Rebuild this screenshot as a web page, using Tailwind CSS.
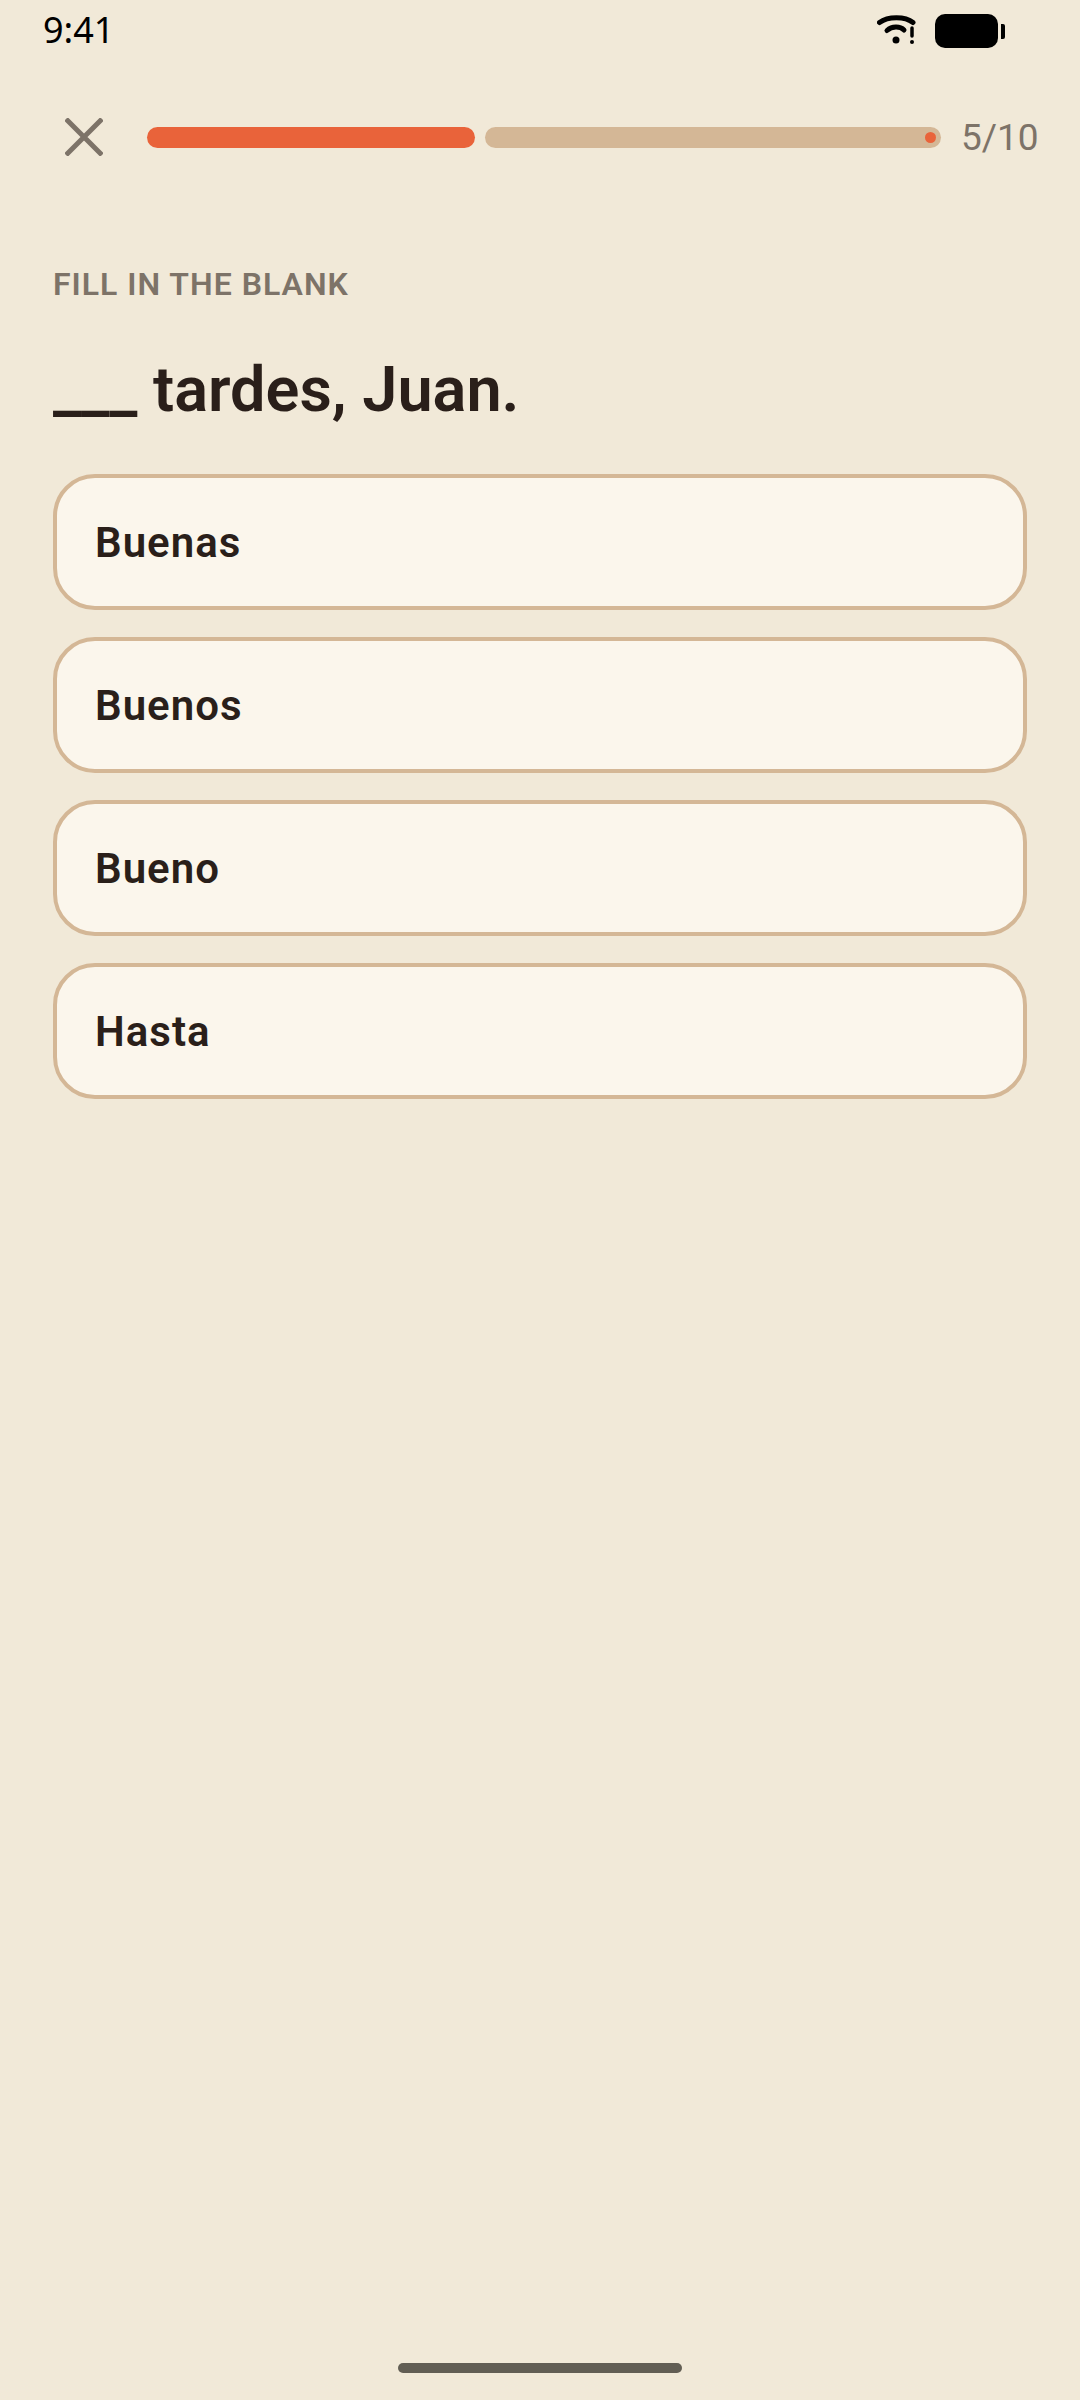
<!DOCTYPE html>
<html lang="en">
  <head>
    <meta charset="UTF-8" />
    <meta name="viewport" content="width=device-width, initial-scale=1.0" />
    <title>Fill in the blank</title>
    <script src="https://cdn.jsdelivr.net/npm/@tailwindcss/browser@4"></script>
  </head>
  <body class="bg-[#f1e9d8] font-['Roboto',sans-serif]">
    <div class="flex flex-col w-[1080px] h-[2400px]">
      <!-- Status bar -->
      <div class="flex items-center justify-between h-[60px] pl-[43px] pr-[75px] shrink-0">
        <span class="text-[36px] leading-none text-black font-['Noto_Sans',sans-serif]">9:41</span>
        <div class="flex items-center gap-[18px]">
          <svg width="40" height="30" viewBox="0 0 40 30" fill="none">
            <path d="M2.500 7.500C11 1 28 1 36 7.500" stroke="#000" stroke-width="5" stroke-linecap="round" />
            <path d="M10 15.500C15 11 23 11 27 15" stroke="#000" stroke-width="5" stroke-linecap="round" />
            <circle cx="19" cy="25" r="3.500" fill="#000" />
            <path d="M35 13V21" stroke="#000" stroke-width="3.500" stroke-linecap="round" />
            <circle cx="35" cy="27" r="2" fill="#000" />
          </svg>
          <div class="flex items-center gap-[3px] mt-[2px]">
            <div class="w-[63px] h-[34px] rounded-[10px] bg-black"></div>
            <div class="w-[4px] h-[15px] rounded-r-[2px] bg-black"></div>
          </div>
        </div>
      </div>

      <!-- Progress header -->
      <div class="flex items-center h-[42px] mt-[56px] shrink-0">
        <button class="flex items-center justify-center w-[38px] h-[38px] ml-[65px]">
          <svg width="38" height="38" viewBox="0 0 38 38" fill="none">
            <path d="M1 1L37 37M37 1L1 37" stroke="#7d7368" stroke-width="5" />
          </svg>
        </button>
        <div class="flex items-center gap-[10px] ml-[44px]">
          <div class="w-[328px] h-[21px] rounded-full bg-[#e9633a]"></div>
          <div class="relative w-[456px] h-[21px] rounded-full bg-[#d4b796]">
            <div class="absolute right-[5px] top-[5px] w-[11px] h-[11px] rounded-full bg-[#e9633a]"></div>
          </div>
        </div>
        <span class="ml-[20px] text-[37px] leading-none text-[#7d7368]">5/10</span>
      </div>

      <!-- Question -->
      <div class="flex flex-col px-[53px] pt-[108px]">
        <p class="text-[32px] leading-[36px] font-semibold tracking-[1px] text-[#7d7368]">FILL IN THE BLANK</p>
        <h1 class="mt-[53px] text-[63px] leading-[70px] font-semibold text-[#2a1f1a]">___ tardes, Juan.</h1>
        <div class="flex flex-col gap-[27px] mt-[49px]">
          <button class="flex items-center h-[136px] px-[38px] rounded-[42px] border-[4px] border-[#d4b796] bg-[#fbf6ec] text-[42px] font-semibold tracking-[1px] text-[#2a1f1a]">Buenas</button>
          <button class="flex items-center h-[136px] px-[38px] rounded-[42px] border-[4px] border-[#d4b796] bg-[#fbf6ec] text-[42px] font-semibold tracking-[1px] text-[#2a1f1a]">Buenos</button>
          <button class="flex items-center h-[136px] px-[38px] rounded-[42px] border-[4px] border-[#d4b796] bg-[#fbf6ec] text-[42px] font-semibold tracking-[1px] text-[#2a1f1a]">Bueno</button>
          <button class="flex items-center h-[136px] px-[38px] rounded-[42px] border-[4px] border-[#d4b796] bg-[#fbf6ec] text-[42px] font-semibold tracking-[1px] text-[#2a1f1a]">Hasta</button>
        </div>
      </div>

      <!-- Home indicator -->
      <div class="mt-auto mb-[27px] mx-auto w-[284px] h-[10px] rounded-full bg-[#625e54]"></div>
    </div>
  </body>
</html>
